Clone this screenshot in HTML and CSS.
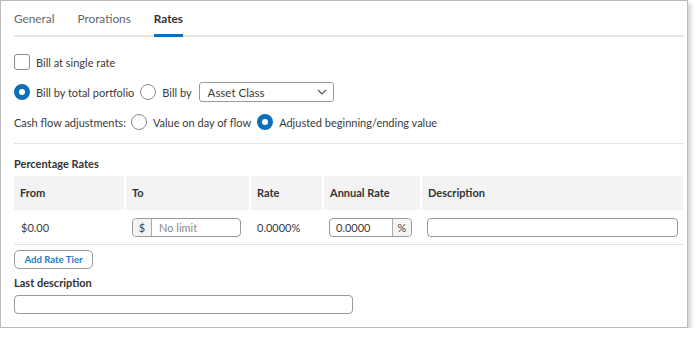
FILE: index.html
```html
<!DOCTYPE html>
<html lang="en">
<head>
	<meta charset="UTF-8">
	<title>Rates</title>
	<link rel="stylesheet" href="styles.css">
</head>
<body>
	<div class="panel">
		<div class="tabs">
			<span class="tab">General</span>
			<span class="tab">Prorations</span>
			<span class="tab active">Rates</span>
		</div>

		<div class="row row-single">
			<span class="check"></span>
			<span class="label">Bill at single rate</span>
		</div>
		<div class="row row-billby">
			<span class="radio on"></span>
			<span class="label">Bill by total portfolio</span>
			<span class="radio"></span>
			<span class="label">Bill by</span>
			<div class="select">
				<span>Asset Class</span>
				<svg width="10" height="6" viewBox="0 0 10 6"><path d="M1 1l4 4 4-4" fill="none" stroke="#555" stroke-width="1.2"/></svg>
			</div>
		</div>
		<div class="row row-cash">
			<span class="label">Cash flow adjustments:</span>
			<span class="radio"></span>
			<span class="label">Value on day of flow</span>
			<span class="radio on"></span>
			<span class="label">Adjusted beginning/ending value</span>
		</div>

		<div class="divider"></div>

		<h3 class="heading">Percentage Rates</h3>
		<div class="grid head">
			<div class="cell">From</div>
			<div class="cell">To</div>
			<div class="cell">Rate</div>
			<div class="cell">Annual Rate</div>
			<div class="cell">Description</div>
		</div>
		<div class="grid body">
			<div class="cell">$0.00</div>
			<div class="cell">
				<div class="group to">
					<span class="addon">$</span>
					<span class="field placeholder">No limit</span>
				</div>
			</div>
			<div class="cell">0.0000%</div>
			<div class="cell">
				<div class="group annual">
					<span class="field">0.0000</span>
					<span class="addon right">%</span>
				</div>
			</div>
			<div class="cell">
				<div class="input desc"></div>
			</div>
		</div>

		<button class="btn">Add Rate Tier</button>
		<h3 class="heading last">Last description</h3>
		<div class="input last-input"></div>
	</div>
</body>
</html>
```

FILE: styles.css
```css
* {
	margin: 0;
	padding: 0;
	box-sizing: border-box;
	font-family: Lato, "Open Sans", sans-serif;
}
body {
	background: #fff;
	color: #3a3a3a;
	font-size: 11px;
}
.panel {
	width: 688px;
	height: 328px;
	border: 1px solid #bcbcbc;
	box-shadow: 3px 3px 4px rgba(0, 0, 0, 0.18);
	padding: 0 3px 0 13px;
}
.tabs {
	display: flex;
	height: 36px;
	border-bottom: 2px solid #e6e6e6;
}
.tab {
	height: 36px;
	line-height: 35px;
	margin-right: 23px;
	font-size: 11.8px;
	color: #666;
	border-bottom: 3px solid transparent;
}
.tab.active {
	color: #333;
	font-weight: bold;
	border-bottom-color: #0c6fb8;
}
.row {
	display: flex;
	align-items: center;
	height: 20px;
}
.row-single {
	margin-top: 15px;
}
.row-billby {
	margin-top: 10px;
}
.row-cash {
	margin-top: 10px;
}
.label {
	margin-right: 6px;
}
.row-cash .label:first-child {
	margin-right: 5px;
}
.check, .radio {
	width: 16px;
	height: 16px;
	border: 1px solid #8a8a8a;
	margin-right: 6px;
	flex: none;
}
.check {
	border-radius: 3px;
}
.radio {
	border-radius: 50%;
}
.radio.on {
	border: 5px solid #0c6fb8;
	background: #fff;
}
.select {
	display: flex;
	align-items: center;
	justify-content: space-between;
	width: 135px;
	height: 20px;
	border: 1px solid #999;
	border-radius: 3px;
	padding: 0 6px 0 8px;
	margin-left: 1px;
	font-size: 11.5px;
}
.divider {
	margin-top: 11px;
	border-top: 1px solid #e3e3e3;
}
.heading {
	font-size: 11px;
	font-weight: bold;
	color: #333;
	height: 16px;
	line-height: 16px;
	margin-top: 12px;
}
.grid {
	display: grid;
	grid-template-columns: 110px 123px 71px 96px 261px;
	column-gap: 2px;
	width: 670px;
}
.head {
	margin-top: 4px;
}
.head .cell {
	background: #f3f3f3;
	height: 34px;
	line-height: 34px;
	padding-left: 6px;
	font-weight: bold;
	color: #333;
}
.body {
	height: 35px;
	border-bottom: 1px solid #e3e3e3;
}
.body .cell {
	display: flex;
	align-items: center;
	padding-left: 6px;
}
.body .cell:first-child {
	padding-left: 7px;
}
.body .cell:nth-child(4), .body .cell:nth-child(5) {
	padding-left: 5px;
}
.group, .input {
	display: flex;
	height: 19px;
	border: 1px solid #999;
	border-radius: 4px;
	overflow: hidden;
}
.group.to {
	width: 109px;
}
.group.annual {
	width: 83px;
}
.addon {
	width: 19px;
	background: #f4f4f4;
	border-right: 1px solid #aaa;
	text-align: center;
	line-height: 17px;
	font-size: 11px;
	color: #444;
}
.addon.right {
	border-right: none;
	border-left: 1px solid #aaa;
}
.field {
	flex: 1;
	line-height: 17px;
	padding-left: 7px;
}
.group.annual .field {
	padding-left: 6px;
}
.placeholder {
	color: #888;
}
.input.desc {
	width: 251px;
}
.btn {
	display: block;
	margin-top: 5px;
	width: 79px;
	height: 19px;
	border: 1px solid #999;
	border-radius: 5px;
	background: #fff;
	color: #1a7cc6;
	font-size: 9.6px;
	font-weight: bold;
}
.heading.last {
	margin-top: 6px;
}
.last-input {
	margin-top: 4px;
	width: 339px;
	height: 19px;
}
```
